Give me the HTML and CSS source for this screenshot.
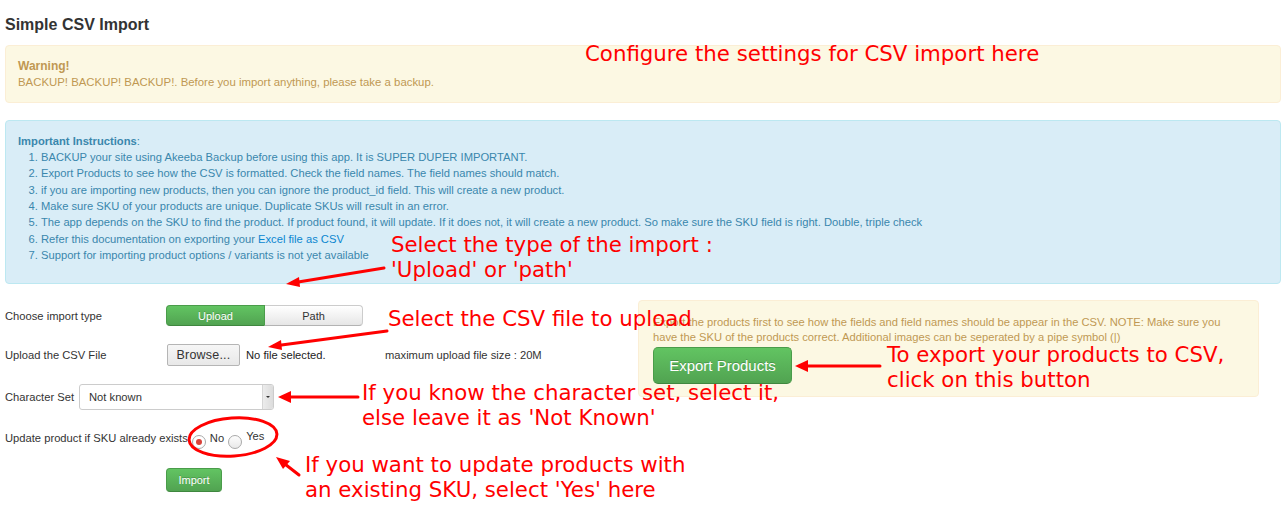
FILE: index.html
```html
<!DOCTYPE html>
<html>
<head>
<meta charset="utf-8">
<title>Simple CSV Import</title>
<link rel="stylesheet" href="styles.css">
</head>
<body>
<div class="page">
  <h1 class="title">Simple CSV Import</h1>

  <div class="alert alert-warning warn-top">
    <div class="alert-heading">Warning!</div>
    <div>BACKUP! BACKUP! BACKUP!. Before you import anything, please take a backup.</div>
  </div>

  <div class="alert alert-info">
    <div><strong>Important Instructions</strong>:</div>
    <ol class="steps">
      <li>BACKUP your site using Akeeba Backup before using this app. It is SUPER DUPER IMPORTANT.</li>
      <li>Export Products to see how the CSV is formatted. Check the field names. The field names should match.</li>
      <li>if you are importing new products, then you can ignore the product_id field. This will create a new product.</li>
      <li>Make sure SKU of your products are unique. Duplicate SKUs will result in an error.</li>
      <li>The app depends on the SKU to find the product. If product found, it will update. If it does not, it will create a new product. So make sure the SKU field is right. Double, triple check</li>
      <li>Refer this documentation on exporting your <a class="link" href="#">Excel file as CSV</a></li>
      <li>Support for importing product options / variants is not yet available</li>
    </ol>
  </div>

  <div class="split">
    <form class="form">
      <div class="row row-type">
        <span class="label label-wide">Choose import type</span>
        <span class="btn-group">
          <span class="btn btn-success btn-seg">Upload</span>
          <span class="btn btn-default btn-seg">Path</span>
        </span>
      </div>
      <div class="row row-file">
        <span class="label label-wide">Upload the CSV File</span>
        <span class="file">
          <span class="browse">Browse...</span>
          <span class="nofile">No file selected.</span>
        </span>
        <span class="maxsize">maximum upload file size : 20M</span>
      </div>
      <div class="row row-charset">
        <span class="label">Character Set</span>
        <span class="select">
          <span class="select-value">Not known</span>
          <span class="select-arrow"><span class="caret"></span></span>
        </span>
      </div>
      <div class="row row-radio">
        <span class="label">Update product if SKU already exists</span>
        <span class="radio radio-checked"><span class="dot"></span></span>
        <span class="radio-label">No</span>
        <span class="radio"></span>
        <span class="radio-label radio-label-up">Yes</span>
      </div>
      <div class="row row-import">
        <span class="label label-wide"></span>
        <span class="btn btn-success btn-import">Import</span>
      </div>
    </form>

    <div class="alert alert-warning export-box">
      <p class="export-text">Export the products first to see how the fields and field names should be appear in the CSV. NOTE: Make sure you have the SKU of the products correct. Additional images can be seperated by a pipe symbol (|)</p>
      <span class="btn btn-success btn-large">Export Products</span>
    </div>
  </div>

  <div class="notes">
    <svg class="marks" width="1283" height="510" viewBox="0 0 1283 510">
      <g stroke="#f00" stroke-width="3" fill="none" stroke-linecap="round">
        <line x1="384" y1="268" x2="292" y2="283"/>
        <line x1="387" y1="331" x2="274" y2="346"/>
        <line x1="358" y1="397" x2="284" y2="397"/>
        <line x1="299" y1="475" x2="281" y2="461"/>
        <line x1="880" y1="366" x2="801" y2="366"/>
        <ellipse cx="233" cy="437" rx="44" ry="19" transform="rotate(-4 233 437)"/>
      </g>
      <g fill="#f00">
        <polygon points="286,284 299,277 300,287"/>
        <polygon points="268,347 281,340 282,350"/>
        <polygon points="278,397 291,391 291,403"/>
        <polygon points="276,457 290,461 283,469"/>
        <polygon points="795,366 808,360 808,372"/>
      </g>
    </svg>
    <div class="note note-configure">Configure the settings for CSV import here</div>
    <div class="note note-type">Select the type of the import :<br>'Upload' or 'path'</div>
    <div class="note note-file">Select the CSV file to upload</div>
    <div class="note note-charset">If you know the character set, select it,<br>else leave it as 'Not Known'</div>
    <div class="note note-update">If you want to update products with<br>an existing SKU, select 'Yes' here</div>
    <div class="note note-export">To export your products to CSV,<br>click on this button</div>
  </div>
</div>
</body>
</html>
```

FILE: styles.css
```css
* { box-sizing: border-box; }

html, body {
  margin: 0;
  padding: 0;
  background: #fff;
}

body {
  font-family: "Liberation Sans", Arial, Helvetica, sans-serif;
  font-size: 11.2px;
  color: #333;
  width: 1283px;
  height: 510px;
  overflow: hidden;
}

.page {
  position: relative;
  padding: 0 2px 0 5px;
  height: 510px;
}

.title {
  margin: 0 0 11px;
  padding-top: 16px;
  font-size: 16px;
  line-height: 18px;
  font-weight: bold;
  color: #333;
}

.alert {
  border: 1px solid;
  border-radius: 4px;
  line-height: 16px;
}

.alert-warning {
  background: #fcf8e3;
  border-color: #fbeed5;
  color: #c09853;
  padding: 12px 35px 12px 12px;
}

.warn-top {
  font-size: 11.4px;
}

.alert-heading {
  font-weight: bold;
  font-size: 12px;
}

.alert-info {
  margin-top: 17px;
  background: #d9edf7;
  border-color: #bce8f1;
  color: #3a87ad;
  padding: 12px 35px 20px 12px;
}

.steps {
  margin: 0;
  padding-left: 23px;
  line-height: 16.33px;
}

.link {
  color: #0a86d0;
  text-decoration: none;
}

.split {
  display: flex;
  margin-top: 16px;
}

.form {
  flex: 0 0 633px;
  padding-top: 5px;
}

.row {
  display: flex;
  align-items: center;
  margin-bottom: 18px;
}

.row-type { height: 21px; }
.row-file { height: 22px; }
.row-charset { height: 26px; }
.row-radio { height: 20px; margin-bottom: 20px; }
.row-import { height: 24px; }

.label {
  white-space: nowrap;
  padding-right: 5px;
}

.label-wide {
  width: 161px;
  flex: 0 0 161px;
}

.btn {
  display: inline-flex;
  align-items: center;
  justify-content: center;
  border: 1px solid;
  border-radius: 4px;
  font-size: 11px;
}

.btn-success {
  color: #fff;
  background: linear-gradient(#62c462, #51a351);
  border-color: #4a9c4a #4a9c4a #3f873f;
  text-shadow: 0 -1px 0 rgba(0, 0, 0, 0.2);
}

.btn-default {
  color: #333;
  background: linear-gradient(#fff, #e6e6e6);
  border-color: #ccc #ccc #b3b3b3;
}

.btn-group {
  display: flex;
  height: 21px;
}

.btn-seg {
  height: 21px;
}

.btn-group .btn-success {
  width: 99px;
  border-radius: 4px 0 0 4px;
}

.btn-group .btn-default {
  width: 98px;
  border-radius: 0 4px 4px 0;
  border-left: none;
}

.file {
  display: flex;
  align-items: center;
  width: 218px;
  margin-left: 1px;
}

.browse {
  display: inline-flex;
  align-items: center;
  justify-content: center;
  width: 73px;
  height: 22px;
  border: 1px solid #b5b5b5;
  border-radius: 2px;
  background: linear-gradient(#f6f6f6, #e8e8e8);
  color: #333;
  font-size: 12.5px;
  letter-spacing: 0.2px;
}

.nofile {
  margin-left: 6px;
  color: #222;
}

.maxsize {
  margin-top: -1px;
}

.select {
  position: relative;
  display: flex;
  align-items: center;
  width: 195px;
  height: 26px;
  border: 1px solid #ccc;
  border-radius: 3px;
  background: #fff;
}

.select-value {
  flex: 1;
  padding-left: 9px;
  color: #333;
}

.select-arrow {
  display: flex;
  align-items: center;
  justify-content: center;
  width: 11px;
  height: 24px;
  background: linear-gradient(90deg, #ececec, #dcdcdc);
  border-left: 1px solid #d6d6d6;
  border-radius: 0 2px 2px 0;
}

.caret {
  width: 0;
  height: 0;
  border-left: 2px solid transparent;
  border-right: 2px solid transparent;
  border-top: 2px solid #333;
}

.row-radio .label {
  padding-right: 0;
}

.radio {
  display: inline-flex;
  align-items: center;
  justify-content: center;
  width: 14px;
  height: 14px;
  border: 1px solid #a9a9a9;
  border-radius: 50%;
  background: linear-gradient(#fdfdfd, #e9e9e9);
  margin-top: 8px;
  margin-left: 1px;
}

.radio-checked {
  background: #fff;
  margin-left: 4px;
}

.dot {
  width: 6px;
  height: 6px;
  border-radius: 50%;
  background: #d9423a;
}

.radio-label {
  margin: 0 3px 0 4px;
  color: #333;
}

.radio-label-up {
  margin-top: -4px;
}

.btn-import {
  width: 56px;
  height: 24px;
}

.export-box {
  width: 621px;
  height: 97px;
  padding: 14px 35px 13px 14px;
  line-height: 15px;
}

.export-text {
  margin: 0 0 2px;
}

.btn-large {
  width: 139px;
  height: 37px;
  font-size: 15px;
  border-radius: 5px;
}

.notes {
  position: absolute;
  left: 0;
  top: 0;
  width: 1283px;
  height: 510px;
  pointer-events: none;
}

.marks {
  position: absolute;
  left: 0;
  top: 0;
}

.note {
  position: absolute;
  font-family: "DejaVu Sans", sans-serif;
  font-size: 21.3px;
  line-height: 25px;
  color: #f00;
  white-space: nowrap;
}

.note-configure { left: 585px; top: 41px; }
.note-type { left: 391px; top: 232px; }
.note-file { left: 388px; top: 306px; }
.note-charset { left: 362px; top: 380px; }
.note-update { left: 305px; top: 452px; }
.note-export { left: 887px; top: 342px; }
```
